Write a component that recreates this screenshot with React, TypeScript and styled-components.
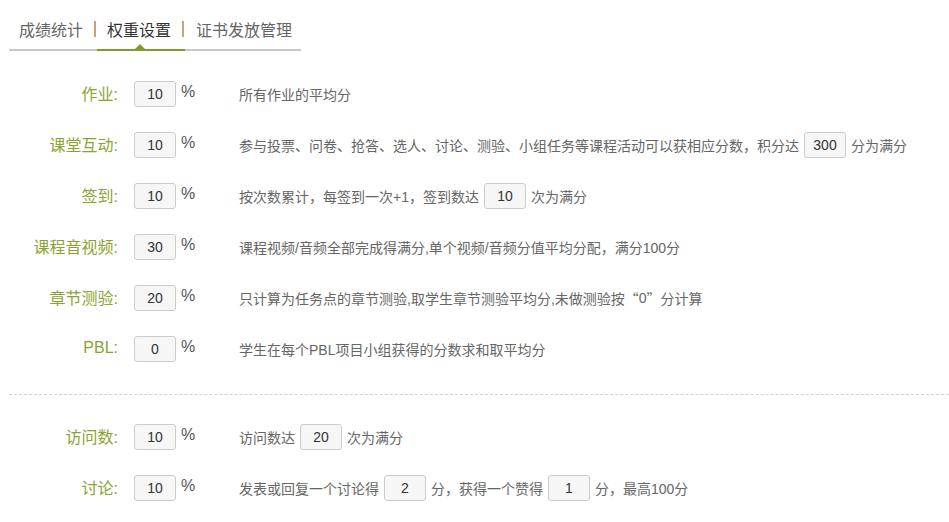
import React from 'react';
import styled, { createGlobalStyle } from 'styled-components';

const GlobalStyle = createGlobalStyle`
  html, body {
    margin: 0;
    padding: 0;
    background: #ffffff;
  }
  body {
    font-family: "Liberation Sans", "Noto Sans CJK SC", sans-serif;
  }
`;

const Page = styled.div`
  width: 949px;
  overflow: hidden;
`;

const TabBar = styled.div`
  display: flex;
  width: fit-content;
  margin-left: 9px;
  border-bottom: 2px solid #c8c8c8;
`;

const Tab = styled.div<{ $active?: boolean; $last?: boolean }>`
  position: relative;
  display: flex;
  align-items: center;
  height: 40px;
  padding-top: 9px;
  padding-left: ${(p) => (p.$last ? 11 : 10)}px;
  padding-right: ${(p) => (p.$last ? 9 : 0)}px;
  font-family: "Noto Sans CJK SC", sans-serif;
  font-size: 16px;
  color: ${(p) => (p.$active ? '#333333' : '#666666')};
  cursor: pointer;

  &::after {
    content: '';
    display: ${(p) => (p.$active ? 'block' : 'none')};
    position: absolute;
    left: 0;
    right: 0;
    bottom: -2px;
    height: 2px;
    background: #7d9d2e;
  }

  &::before {
    content: '';
    display: ${(p) => (p.$active ? 'block' : 'none')};
    position: absolute;
    left: 50%;
    bottom: 0;
    margin-left: -6px;
    border-left: 5px solid transparent;
    border-right: 5px solid transparent;
    border-bottom: 5px solid #7d9d2e;
  }
`;

const TabSep = styled.span`
  display: block;
  width: 2px;
  height: 16px;
  margin-left: 11px;
  margin-right: 1px;
  background: #c9a27a;
`;

const Form = styled.div`
  margin-top: 30px;
`;

const Section = styled.div`
  display: flex;
  flex-direction: column;
  gap: 25px;
`;

const Divider = styled.div`
  margin: 32px 0 29px 9px;
  border-top: 1px dashed #d2d2d2;
`;

const Row = styled.div`
  display: flex;
  align-items: center;
  height: 26px;
`;

const Label = styled.div`
  flex-shrink: 0;
  width: 118px;
  margin-right: 16px;
  margin-top: -2px;
  text-align: right;
  font-size: 16px;
  color: #8aa332;
  white-space: nowrap;
`;

const NumBox = styled.input`
  flex-shrink: 0;
  box-sizing: border-box;
  width: 42px;
  height: 26px;
  margin: 0;
  padding: 0;
  border: 1px solid #cccccc;
  border-radius: 3px;
  background: #f6f6f6;
  font-family: "Liberation Sans", sans-serif;
  font-size: 14px;
  color: #333333;
  text-align: center;
  outline: none;
`;

const InlineNum = styled(NumBox)`
  margin: 0 5px;
`;

const Percent = styled.div`
  flex-shrink: 0;
  align-self: flex-start;
  box-sizing: border-box;
  width: 63px;
  padding-left: 5px;
  padding-top: 1px;
  font-size: 16px;
  line-height: 20px;
  color: #555555;
`;

const Desc = styled.div`
  display: flex;
  align-items: center;
  margin-top: -1px;
  font-size: 14px;
  color: #666666;
  white-space: nowrap;
`;

const Cjk = styled.span`
  font-family: "Noto Sans CJK SC", sans-serif;
`;

type Item = {
  label: string;
  value: string;
  desc: React.ReactNode;
};

const firstGroup: Item[] = [
  { label: '作业:', value: '10', desc: '所有作业的平均分' },
  {
    label: '课堂互动:',
    value: '10',
    desc: (
      <>
        参与投票、问卷、抢答、选人、讨论、测验、小组任务等课程活动可以获相应分数，积分达
        <InlineNum readOnly value="300" />
        分为满分
      </>
    ),
  },
  {
    label: '签到:',
    value: '10',
    desc: (
      <>
        按次数累计，每签到一次+1，签到数达
        <InlineNum readOnly value="10" />
        次为满分
      </>
    ),
  },
  {
    label: '课程音视频:',
    value: '30',
    desc: '课程视频/音频全部完成得满分,单个视频/音频分值平均分配，满分100分',
  },
  {
    label: '章节测验:',
    value: '20',
    desc: (
      <>
        只计算为任务点的章节测验,取学生章节测验平均分,未做测验按<Cjk>“</Cjk>0<Cjk>”</Cjk>分计算
      </>
    ),
  },
  { label: 'PBL:', value: '0', desc: '学生在每个PBL项目小组获得的分数求和取平均分' },
];

const secondGroup: Item[] = [
  {
    label: '访问数:',
    value: '10',
    desc: (
      <>
        访问数达
        <InlineNum readOnly value="20" />
        次为满分
      </>
    ),
  },
  {
    label: '讨论:',
    value: '10',
    desc: (
      <>
        发表或回复一个讨论得
        <InlineNum readOnly value="2" />
        分，获得一个赞得
        <InlineNum readOnly value="1" />
        分，最高100分
      </>
    ),
  },
];

const WeightRow = ({ item }: { item: Item }) => (
  <Row>
    <Label>{item.label}</Label>
    <NumBox readOnly value={item.value} />
    <Percent>%</Percent>
    <Desc>{item.desc}</Desc>
  </Row>
);

export default function App() {
  return (
    <Page>
      <GlobalStyle />
      <TabBar>
        <Tab>
          成绩统计
          <TabSep />
        </Tab>
        <Tab $active>
          权重设置
          <TabSep />
        </Tab>
        <Tab $last>证书发放管理</Tab>
      </TabBar>
      <Form>
        <Section>
          {firstGroup.map((it) => (
            <WeightRow key={it.label} item={it} />
          ))}
        </Section>
        <Divider />
        <Section>
          {secondGroup.map((it) => (
            <WeightRow key={it.label} item={it} />
          ))}
        </Section>
      </Form>
    </Page>
  );
}
